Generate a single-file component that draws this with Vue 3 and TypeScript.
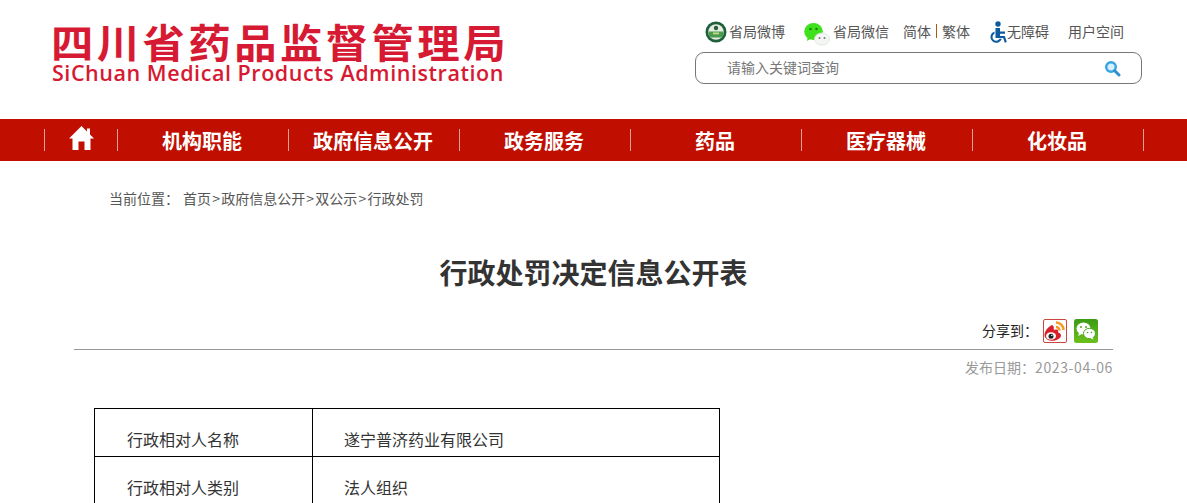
<template>
  <div class="page">
    <header class="top">
      <div class="logo">
        <div class="logo-cn">四川省药品监督管理局</div>
        <div class="logo-en">SiChuan Medical Products Administration</div>
      </div>
      <div class="tools">
        <div class="links">
          <a class="link weibo">
            <svg width="22" height="22" viewBox="0 0 22 22">
              <circle cx="11" cy="11" r="10.5" fill="#1f5f3b" />
              <circle cx="11" cy="11" r="7.8" fill="#e6ece2" />
              <path d="M3.500 10.500h15v3.500q-.5 1.500-1.500 2.500H5q-1-1-1.500-2.500z" fill="#4a9a50" />
              <rect x="8" y="11.500" width="6" height="1.800" fill="#c9d98a" />
              <circle cx="11" cy="7" r="2.200" fill="#2b5d3a" />
            </svg>
            <span>省局微博</span>
          </a>
          <a class="link wechat">
            <svg class="wechat-logo" width="26" height="24" viewBox="0 0 26 24">
              <ellipse cx="9.500" cy="9.500" rx="9.300" ry="8.500" fill="#3fe01c" />
              <path d="M4 14l-1 5 5-3z" fill="#3fe01c" />
              <circle cx="6.500" cy="7" r="1.300" fill="#178a05" />
              <circle cx="12.500" cy="7" r="1.300" fill="#178a05" />
              <ellipse cx="18" cy="17" rx="7.500" ry="6" fill="#f4f6f4" stroke="#dde1dd" stroke-width="0.800" />
              <circle cx="15.500" cy="16" r="1" fill="#777" />
              <circle cx="20.500" cy="16" r="1" fill="#777" />
            </svg>
            <span>省局微信</span>
          </a>
          <span class="lang">简体<i></i>繁体</span>
          <a class="link access">
            <svg width="17" height="23" viewBox="0 0 17 23">
              <circle cx="8" cy="3" r="2.700" fill="#0d5a9e" />
              <path d="M5.500 7H10v3.500h5v2.200h-5V15h4.800l2 6-2 .7-1.600-4.700H5.500z" fill="#0d5a9e" />
              <path d="M4.500 10.500v2.300a3.700 3.700 0 1 0 5 5h2.300A5.800 5.800 0 1 1 4.500 10.500z" fill="#0d5a9e" />
            </svg>
            <span>无障碍</span>
          </a>
          <a class="link user"><span>用户空间</span></a>
        </div>
        <div class="search">
          <span>请输入关键词查询</span>
          <svg width="17" height="17" viewBox="0 0 17 17">
            <circle cx="7" cy="7" r="4.800" fill="#d8f0fb" stroke="#35a4e4" stroke-width="2.400" />
            <path d="M10.500 10.500l4.500 4.500" stroke="#2f8fd0" stroke-width="3" stroke-linecap="round" />
          </svg>
        </div>
      </div>
    </header>

    <nav class="nav">
      <ul>
        <li class="home">
          <svg width="25" height="24" viewBox="0 0 25 24">
            <path d="M12.500 0L0 12.500h3.500V24h6v-8.500h6V24h6V12.500H25L21 8.500V2.500h-3v3z" fill="#fff" />
          </svg>
        </li>
        <li v-for="item in navItems" :key="item">{{ item }}</li>
      </ul>
    </nav>

    <div class="crumb">
      <span class="here">当前位置：</span>
      <span>首页<i>&gt;</i>政府信息公开<i>&gt;</i>双公示<i>&gt;</i>行政处罚</span>
    </div>

    <h1 class="title">行政处罚决定信息公开表</h1>

    <div class="share">
      <span>分享到：</span>
      <svg class="share-icon" width="24" height="24" viewBox="0 0 24 24">
        <rect x="0.500" y="0.500" width="23" height="23" rx="1.500" fill="#fff" stroke="#c8483f" />
        <path d="M13 3.500a7.500 7.500 0 0 1 7.500 7.500" stroke="#f59a1c" stroke-width="2.500" fill="none" />
        <path d="M13 8a3.500 3.500 0 0 1 3.500 3.500" stroke="#f59a1c" stroke-width="2.500" fill="none" />
        <path d="M9 6C5.500 7.500 1.500 12 1.500 16c0 3.500 4 5.800 8 5.800 4.500 0 8.500-2.800 8.500-5.300 0-2-2-2.700-3-3.200.8-2-.2-3.300-3.200-2.500-1 .3-1.300.1-1-1 .4-2.300-.8-4.400-2.800-3.800z" fill="#d9202a" />
        <ellipse cx="8" cy="17" rx="5" ry="3.800" fill="#fff" />
        <circle cx="8" cy="17.200" r="2.500" fill="#222" />
        <circle cx="8.800" cy="16.400" r=".7" fill="#fff" />
      </svg>
      <svg class="share-icon" width="24" height="24" viewBox="0 0 24 24">
        <defs>
          <linearGradient id="wx-bg" x1="0" y1="0" x2="0" y2="1">
            <stop offset="0" stop-color="#3d9a15" />
            <stop offset="1" stop-color="#6cc01c" />
          </linearGradient>
        </defs>
        <rect width="24" height="24" rx="2.500" fill="url(#wx-bg)" />
        <ellipse cx="9.500" cy="9.500" rx="7" ry="6" fill="#fff" />
        <path d="M5 13.500l-.8 3.500 4-2.200z" fill="#fff" />
        <ellipse cx="15.500" cy="14.500" rx="6" ry="5.200" fill="#fff" stroke="#4aa616" />
        <path d="M18.500 18l1 2.500-3.500-1.500z" fill="#fff" />
        <circle cx="7" cy="8" r="1" fill="#4aa616" />
        <circle cx="12" cy="8" r="1" fill="#4aa616" />
        <circle cx="13.500" cy="13.500" r=".8" fill="#4aa616" />
        <circle cx="17.500" cy="13.500" r=".8" fill="#4aa616" />
      </svg>
    </div>

    <div class="date">发布日期：<span>2023-04-06</span></div>

    <table class="info">
      <tbody>
        <tr v-for="row in rows" :key="row.label">
          <td class="label">{{ row.label }}</td>
          <td class="value">{{ row.value }}</td>
        </tr>
      </tbody>
    </table>
  </div>
</template>

<script setup lang="ts">
const navItems: string[] = ['机构职能', '政府信息公开', '政务服务', '药品', '医疗器械', '化妆品']

const rows = [
  { label: '行政相对人名称', value: '遂宁普济药业有限公司' },
  { label: '行政相对人类别', value: '法人组织' },
]
</script>

<style>
html,
body {
  margin: 0;
  height: 503px;
  overflow: hidden;
  background: #fff;
}
</style>

<style scoped>
.page {
  height: 503px;
  overflow: hidden;
  font-family: "Noto Sans CJK SC", "Liberation Sans", sans-serif;
  font-size: 14px;
  color: #555;
}

.top {
  height: 119px;
  box-sizing: border-box;
  padding: 0 45px 0 51px;
  display: flex;
  justify-content: space-between;
}

.logo {
  padding-top: 21px;
  color: #d71a33;
}

.logo-cn {
  font-size: 40px;
  line-height: 40px;
  font-weight: 700;
  white-space: nowrap;
  letter-spacing: 3.200px;
  transform: scaleX(1.06);
  transform-origin: left center;
}

.logo-en {
  font-family: "Open Sans", "Liberation Sans", sans-serif;
  font-size: 21.500px;
  line-height: 24px;
  margin: 0 0 0 1px;
  font-weight: 600;
  letter-spacing: 0.550px;
  white-space: nowrap;
}

.tools {
  width: 447px;
  padding-top: 16px;
}

.links {
  height: 32px;
  display: flex;
  align-items: center;
  padding-left: 10px;
  white-space: nowrap;
}

.links span {
  margin-top: -2px;
}

.link {
  display: flex;
  align-items: center;
}

.weibo {
  gap: 2px;
  width: 99px;
}

.wechat {
  gap: 3px;
  width: 99px;
}

.wechat-logo {
  margin-top: 4px;
}

.lang {
  display: flex;
  align-items: center;
  width: 87px;
}

.lang i {
  width: 1px;
  height: 14px;
  margin: 0 5px;
  background: #a85a10;
}

.access {
  width: 78px;
}

.search {
  height: 32px;
  margin-top: 4px;
  box-sizing: border-box;
  border: 1px solid #777;
  border-radius: 9px;
  padding: 0 20px 0 31px;
  display: flex;
  align-items: center;
  justify-content: space-between;
  color: #777;
}

.search span {
  margin-top: -2px;
}

.nav {
  height: 42px;
  background: #c00f00;
}

.nav ul {
  list-style: none;
  margin: 0;
  padding: 0 0 0 44px;
  display: flex;
  height: 42px;
}

.nav li {
  width: 171px;
  box-sizing: border-box;
  margin-top: 10px;
  height: 22px;
  padding-right: 2px;
  border-left: 1px solid #e3a09a;
  display: flex;
  align-items: center;
  justify-content: center;
  color: #fff;
  font-size: 20px;
  font-weight: 700;
}

.nav li:last-child {
  border-right: 1px solid #e3a09a;
  width: 172px;
}

.nav li.home {
  width: 73px;
  padding-right: 0;
}

.home svg {
  margin-bottom: 5px;
}

.crumb {
  margin-top: 27px;
  padding-left: 109px;
  line-height: 20px;
  color: #555;
}

.crumb i {
  font-style: normal;
  padding: 0 1.200px;
}

.here {
  margin-right: 4px;
}

.title {
  margin: 45px 0 0;
  text-align: center;
  font-size: 28px;
  line-height: 38px;
  font-weight: 700;
  color: #333;
}

.share {
  margin: 28px 89px 0 0;
  height: 24px;
  display: flex;
  align-items: center;
  justify-content: flex-end;
  gap: 7px;
  color: #222;
}

.share span {
  margin: -2px -2px 0 0;
}

.date {
  margin: 6px 74px 0;
  padding-top: 1px;
  border-top: 1px solid #999;
  height: 37px;
  line-height: 32px;
  text-align: right;
  color: #999;
}

.date span {
  letter-spacing: 0.600px;
}

.info {
  margin: 20px 0 0 94px;
  width: 626px;
  border-collapse: collapse;
  color: #333;
  font-size: 16px;
}

.info td {
  border: 1px solid #000;
  height: 48px;
  padding: 12px 0 0;
  box-sizing: border-box;
  line-height: 30px;
  vertical-align: middle;
}

.label {
  width: 218px;
  padding-left: 32px !important;
}

.value {
  padding-left: 31px !important;
}
</style>
